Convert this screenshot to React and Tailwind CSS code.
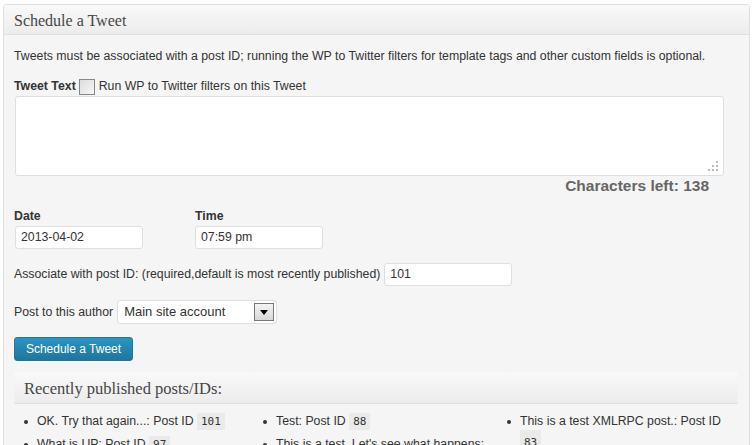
import React from 'react';

const posts = [
  [
    { title: 'OK. Try that again...', id: '101' },
    { title: 'What is UP', id: '97' },
  ],
  [
    { title: 'Test', id: '88' },
    { title: "This is a test. Let's see what happens", id: '79' },
  ],
  [{ title: 'This is a test XMLRPC post.', id: '83', wrap: true }],
];

function PostItem({ post }) {
  return (
    <li className="flex items-start gap-[9px] leading-[22px]">
      <span className="mt-[10px] h-[4px] w-[4px] shrink-0 rounded-full bg-[#333]" />
      <span>
        {post.title}: Post ID{' '}
        <code
          className={`bg-[#eaeaea] px-[4px] py-[2px] text-[11px] ${post.wrap ? 'mt-[-2px] block w-fit' : ''}`}
          style={{ fontFamily: '"DejaVu Sans Mono", monospace' }}
        >
          {post.id}
        </code>
      </span>
    </li>
  );
}

export default function App() {
  return (
    <div
      className="h-[445px] w-[755px] overflow-hidden bg-white pl-[3px] pt-[4px] text-[12.3px] text-[#333]"
      style={{ fontFamily: '"Liberation Sans", Arial, sans-serif' }}
    >
      <div className="w-[747px] rounded-t-[3px] border border-[#dfdfdf] bg-[#f5f5f5]">
        <div className="h-[30px] border-b border-[#dfdfdf] bg-gradient-to-b from-[#f9f9f9] to-[#ececec] pl-[10px] pt-[4px]">
          <h3
            className="text-[16px] text-[#464646]"
            style={{ fontFamily: '"Liberation Serif", Georgia, serif' }}
          >
            Schedule a Tweet
          </h3>
        </div>

        <div className="pl-[10px] pr-[12px] pt-[13px]">
          <p className="leading-[17px]">
            Tweets must be associated with a post ID; running the WP to Twitter filters for template tags and other custom
            fields is optional.
          </p>

          <div className="mt-[13px] flex items-center gap-[3px] leading-[17px]">
            <span className="font-bold">Tweet Text</span>
            <span className="h-[16px] w-[16px] border border-[#888] bg-gradient-to-br from-[#dcdcdc] to-[#f7f7f7]" />
            <span className="ml-[1px]">Run WP to Twitter filters on this Tweet</span>
          </div>

          <div className="relative ml-[1px] mt-[1px] h-[80px] w-[709px] rounded-[3px] border border-[#dfdfdf] bg-white">
            <svg className="absolute bottom-[3px] right-[4px]" width="12" height="12" viewBox="0 0 12 12">
              <g fill="#bbb">
                <rect x="9" y="1" width="2" height="2" />
                <rect x="5" y="5" width="2" height="2" />
                <rect x="9" y="5" width="2" height="2" />
                <rect x="1" y="9" width="2" height="2" />
                <rect x="5" y="9" width="2" height="2" />
                <rect x="9" y="9" width="2" height="2" />
              </g>
            </svg>
          </div>

          <div className="flex w-[695px] justify-end">
            <span className="text-[15.5px] font-bold leading-[20px] text-[#666]">Characters left: 138</span>
          </div>

          <div className="mt-[12px] flex gap-[52px]">
            <div>
              <div className="font-bold leading-[17px]">Date</div>
              <div className="ml-[1px] mt-[1px] flex h-[23px] w-[128px] items-center rounded-[3px] border border-[#dfdfdf] bg-white px-[5px]">
                2013-04-02
              </div>
            </div>
            <div>
              <div className="font-bold leading-[17px]">Time</div>
              <div className="mt-[1px] flex h-[23px] w-[128px] items-center rounded-[3px] border border-[#dfdfdf] bg-white px-[5px]">
                07:59 pm
              </div>
            </div>
          </div>

          <div className="mt-[14px] flex items-center gap-[4px]">
            <span>Associate with post ID: (required,default is most recently published)</span>
            <div className="flex h-[23px] w-[128px] items-center rounded-[3px] border border-[#dfdfdf] bg-white px-[5px]">
              101
            </div>
          </div>

          <div className="mt-[14px] flex items-center gap-[4px]">
            <span>Post to this author</span>
            <div className="flex h-[24px] w-[160px] items-center justify-between rounded-[3px] border border-[#dfdfdf] bg-white pl-[6px] pr-[2px]">
              <span className="text-[13px]">Main site account</span>
              <span className="flex h-[18px] w-[20px] items-center justify-center border border-[#777] bg-gradient-to-b from-[#f4f4f4] to-[#d8d8d8]">
                <svg width="8" height="5" viewBox="0 0 8 5">
                  <path d="M0 0h8L4 5z" fill="#000" />
                </svg>
              </span>
            </div>
          </div>

          <button className="mt-[13px] flex h-[24px] w-[119px] items-center justify-center rounded-[3px] border border-[#21759b] bg-gradient-to-b from-[#2a95c5] to-[#21759b] text-[12px] text-white">
            Schedule a Tweet
          </button>

          <div className="mt-[11px] w-[724px]">
            <div className="h-[32px] border-b border-[#dfdfdf] bg-gradient-to-b from-[#f9f9f9] to-[#ececec] pl-[10px] pt-[5px]">
              <h4
                className="text-[16.5px] text-[#464646]"
                style={{ fontFamily: '"Liberation Serif", Georgia, serif' }}
              >
                Recently published posts/IDs:
              </h4>
            </div>
            <div className="mt-[6px] grid grid-cols-[239px_244px_1fr] pl-[10px]">
              {posts.map((col, i) => (
                <ul key={i}>
                  {col.map((p, j) => (
                    <PostItem key={j} post={p} />
                  ))}
                </ul>
              ))}
            </div>
          </div>
        </div>
      </div>
    </div>
  );
}
